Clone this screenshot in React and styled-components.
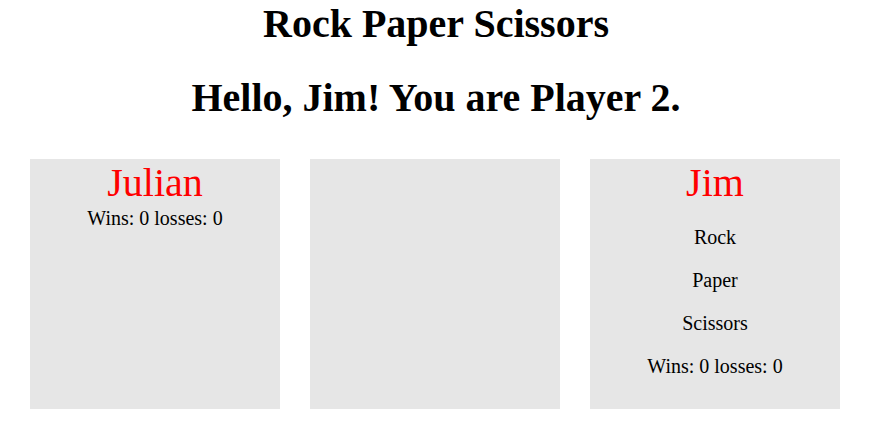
import React from 'react';
import styled, { createGlobalStyle } from 'styled-components';

const GlobalStyle = createGlobalStyle`
    body {
        margin: 0;
        background: #ffffff;
        font-family: "Liberation Serif", "Times New Roman", serif;
        color: #000;
    }
`;

const Page = styled.div`
    text-align: center;
`;

const Title = styled.h1`
    font-size: 40px;
    margin: 0;
    padding-top: 1px;
    line-height: 46px;
`;

const Greeting = styled.h2`
    font-size: 40px;
    margin: 0;
    padding-top: 28px;
    line-height: 46px;
`;

const Board = styled.div`
    display: flex;
    justify-content: center;
    gap: 30px;
    margin-top: 38px;
    padding-right: 2px;
`;

const Panel = styled.div`
    width: 250px;
    height: 250px;
    background: #e6e6e6;
    display: flex;
    flex-direction: column;
    align-items: center;
`;

const Name = styled.div`
    color: red;
    font-size: 40px;
    line-height: 44px;
    margin-top: 2px;
`;

const Choices = styled.div`
    display: flex;
    flex-direction: column;
    align-items: center;
    padding-top: 11px;
`;

const Choice = styled.div`
    font-size: 20px;
    line-height: 43px;
    cursor: pointer;
`;

const Score = styled.div`
    font-size: 20px;
    line-height: ${p => (p.$own ? '43px' : '26px')};
`;

function Player({ name, own }) {
    return (
        <Panel>
            <Name>{name}</Name>
            {own ? (
                <Choices>
                    <Choice>Rock</Choice>
                    <Choice>Paper</Choice>
                    <Choice>Scissors</Choice>
                    <Score $own>Wins: 0 losses: 0</Score>
                </Choices>
            ) : (
                <Score>Wins: 0 losses: 0</Score>
            )}
        </Panel>
    );
}

export default function App() {
    return (
        <Page>
            <GlobalStyle />
            <Title>Rock Paper Scissors</Title>
            <Greeting>Hello, Jim! You are Player 2.</Greeting>
            <Board>
                <Player name="Julian" />
                <Panel />
                <Player name="Jim" own />
            </Board>
        </Page>
    );
}
